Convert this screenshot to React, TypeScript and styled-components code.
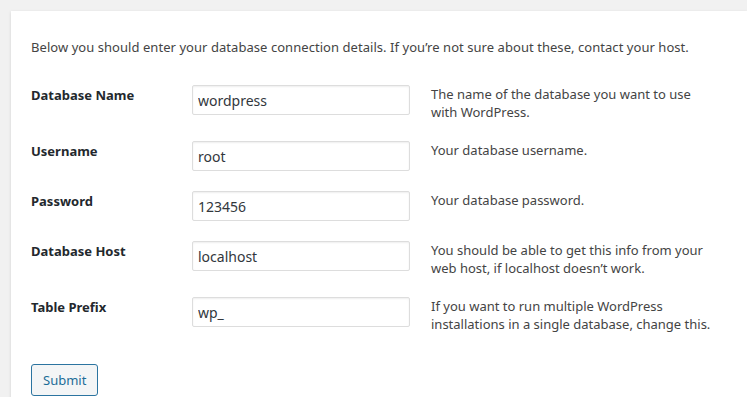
import React from 'react';
import styled, { createGlobalStyle } from 'styled-components';

const GlobalStyle = createGlobalStyle`
  html, body {
    margin: 0;
    padding: 0;
    background: #f1f1f1;
  }
  body {
    font-family: "Noto Sans", "Open Sans", "Liberation Sans", sans-serif;
    font-size: 13px;
    color: #444;
  }
`;

const Page = styled.div`
  padding: 11px 0 0 11px;
  min-height: 100vh;
  box-sizing: border-box;
`;

const Card = styled.div`
  background: #fff;
  padding: 14px 20px 30px;
  box-shadow: 0 1px 3px rgba(0, 0, 0, 0.13);
`;

const Intro = styled.p`
  margin: 13px 0 19px;
  line-height: 18px;
  letter-spacing: 0.05px;
`;

const FormTable = styled.div`
  display: flex;
  flex-direction: column;
`;

const Row = styled.div`
  display: grid;
  grid-template-columns: 140px 218px 1fr;
  column-gap: 21px;
  align-items: start;
  padding: 10px 0;
`;

const Label = styled.label`
  font-weight: 700;
  color: #23282d;
  line-height: 18px;
  padding-top: 1px;
`;

const Input = styled.input`
  box-sizing: border-box;
  width: 218px;
  height: 30px;
  margin: 0;
  padding: 2px 5px;
  font: inherit;
  font-size: 14px;
  color: #32373c;
  border: 1px solid #ddd;
  border-radius: 2px;
  background: #fff;
  box-shadow: inset 0 1px 2px rgba(0, 0, 0, 0.07);
  outline: none;
`;

const Description = styled.div`
  line-height: 17.6px;
  padding-top: 1px;
  max-width: 288px;
`;

const SubmitRow = styled.div`
  margin-top: 20px;
`;

const Button = styled.button`
  box-sizing: border-box;
  height: 32px;
  padding: 0 11px;
  font: inherit;
  font-size: 13px;
  color: #1c6d98;
  background: #f3f5f6;
  border: 1px solid #2b74a0;
  border-radius: 3px;
  cursor: pointer;
`;

const fields = [
  { id: 'dbname', label: 'Database Name', value: 'wordpress', desc: 'The name of the database you want to use with WordPress.' },
  { id: 'uname', label: 'Username', value: 'root', desc: 'Your database username.' },
  { id: 'pwd', label: 'Password', value: '123456', desc: 'Your database password.' },
  { id: 'dbhost', label: 'Database Host', value: 'localhost', desc: 'You should be able to get this info from your web host, if localhost doesn\u2019t work.' },
  { id: 'prefix', label: 'Table Prefix', value: 'wp_', desc: 'If you want to run multiple WordPress installations in a single database, change this.' },
];

export default function App() {
  return (
    <>
      <GlobalStyle />
      <Page>
        <Card>
          <Intro>
            Below you should enter your database connection details. If you’re not sure about these, contact your host.
          </Intro>
          <FormTable>
            {fields.map(f => (
              <Row key={f.id}>
                <Label htmlFor={f.id}>{f.label}</Label>
                <Input id={f.id} defaultValue={f.value} />
                <Description>{f.desc}</Description>
              </Row>
            ))}
          </FormTable>
          <SubmitRow>
            <Button type="button">Submit</Button>
          </SubmitRow>
        </Card>
      </Page>
    </>
  );
}
